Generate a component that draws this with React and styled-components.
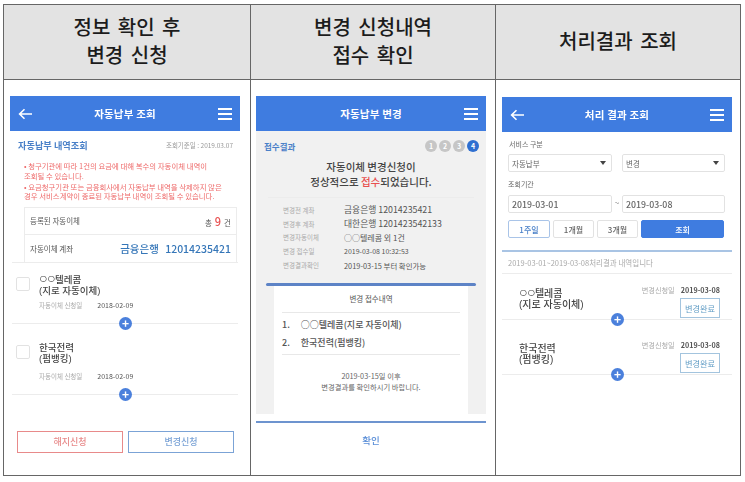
import React from "react";
import styled, { createGlobalStyle } from "styled-components";

const Global = createGlobalStyle`
  html, body { margin: 0; padding: 0; background: #fff; }
  body { font-family: "Noto Sans CJK KR", "Noto Sans", sans-serif; width: 745px; height: 482px; overflow: hidden; }
  * { box-sizing: border-box; }
`;

const Table = styled.div`
  margin: 4px 0 0 3px;
  width: 738px;
  height: 472px;
  border: 1.5px solid #666;
  display: grid;
  grid-template-columns: 246px 245px 1fr;
  grid-template-rows: 75px 1fr;
`;
const HeadCell = styled.div`
  background: #e3e3e3;
  border-bottom: 1.5px solid #666;
  border-left: ${(p) => (p.$first ? "none" : "1.5px solid #666")};
  display: flex;
  flex-direction: column;
  justify-content: center;
  align-items: center;
  padding-bottom: 3px;
  font-size: 20px;
  line-height: 28px;
  font-weight: 500;
  color: #1c1c1c;
  word-spacing: 3px;
`;
const Cell = styled.div`
  border-left: ${(p) => (p.$first ? "none" : "1.5px solid #666")};
  padding: ${(p) => p.$pad};
  display: flex;
  flex-direction: column;
  min-height: 0;
  overflow: hidden;
  filter: blur(0.5px);
`;
const AppBar = styled.div`
  flex: none;
  height: 35px;
  background: #3f7ce0;
  color: #fff;
  display: flex;
  align-items: center;
  justify-content: space-between;
  padding: 0 8px;
  font-size: 10.5px;
  font-weight: 700;
  letter-spacing: 0.2px;
  position: relative;
`;
const BarTitle = styled.span`
  position: absolute;
  left: 0;
  right: 0;
  text-align: center;
`;
const Spacer = styled.span`
  width: 14px;
`;
const Arrow = () => (
  <svg width="15" height="12" viewBox="0 0 15 12" fill="none" stroke="#fff" strokeWidth="1.6">
    <path d="M14 6H2M6.5 1.2 1.6 6l4.9 4.8" />
  </svg>
);
const Menu = () => (
  <svg width="14" height="12" viewBox="0 0 14 12" fill="#fff">
    <rect y="0" width="14" height="2" />
    <rect y="5" width="14" height="2" />
    <rect y="10" width="14" height="2" />
  </svg>
);
const Plus = styled.span`
  position: absolute;
  left: 50%;
  top: -6px;
  margin-left: -6px;
  width: 13px;
  height: 13px;
  border-radius: 50%;
  background: #4b80dc;
  color: #fff;
  font-size: 12px;
  line-height: 12px;
  font-weight: 700;
  text-align: center;
`;

/* column 1 */
const TitleRow = styled.div`
  display: flex;
  justify-content: space-between;
  align-items: center;
  padding: 7px 7px 0 8px;
  height: 21px;
`;
const SectionTitle = styled.span`
  font-size: ${(p) => p.$s || "8.5px"};
  font-weight: 700;
  color: #4a80c8;
`;
const SmallGray = styled.span`
  font-size: 6.5px;
  color: #9a9a9a;
`;
const Notes = styled.div`
  margin: 9px 0 0 14px;
  font-size: 7.4px;
  line-height: 9.5px;
  color: #ee6a6a;
`;
const Note = styled.div`
  margin-bottom: ${(p) => (p.$last ? "0" : "1.5px")};
  white-space: pre;
`;
const InfoBox = styled.div`
  margin: 6px 3px 0 14px;
  border: 1px solid #ececec;
  border-bottom: none;
`;
const InfoRow = styled.div`
  height: 27px;
  display: flex;
  align-items: center;
  justify-content: space-between;
  padding: 0 5px;
  font-size: 7.5px;
  color: #555;
  border-bottom: ${(p) => (p.$last ? "none" : "1px solid #ececec")};
`;
const Count = styled.span`
  font-size: 7.5px;
`;
const RedNum = styled.b`
  color: #e85050;
  font-size: 11px;
  font-weight: 500;
  margin: 0 3px;
`;
const BlueVal = styled.span`
  color: #3576b8;
  font-size: 10.5px;
  font-weight: 500;
  word-spacing: 4px;
`;
const Rule = styled.div`
  height: ${(p) => p.$h || "1px"};
  background: ${(p) => p.$c || "#ececec"};
  margin: ${(p) => p.$m || "0"};
  position: relative;
  flex: none;
`;
const Item = styled.div`
  display: flex;
  gap: 9px;
  padding: ${(p) => p.$top} 0 0 6px;
  height: ${(p) => p.$height};
`;
const Check = styled.span`
  width: 14px;
  height: 14px;
  border: 1px solid #e2e2e2;
  border-radius: 2px;
  flex: none;
`;
const Name = styled.div`
  font-family: "Liberation Sans", "Noto Sans CJK KR", sans-serif;
  font-size: 9.5px;
  line-height: 11px;
  margin-top: -3px;
  color: #444;
  font-weight: 500;
`;
const Rings = styled.span`
  font-size: 14px;
  line-height: 0;
  letter-spacing: -0.5px;
  font-weight: 400;
`;
const SubRow = styled.div`
  display: flex;
  gap: 15px;
  padding: 2px 0 0 29px;
  height: 25px;
  align-items: flex-start;
  font-size: 6.5px;
  line-height: 11px;
  color: #aaa;
`;
const DateText = styled.span`
  color: #555;
  font-size: 7px;
`;
const Buttons = styled.div`
  display: flex;
  gap: 5px;
  margin: 36px 0 0 7px;
`;
const OutlineBtn = styled.div`
  width: 106px;
  height: 22px;
  border: 1px solid ${(p) => p.$c};
  color: ${(p) => p.$c};
  display: flex;
  align-items: center;
  justify-content: center;
  font-size: 9px;
  font-weight: 500;
`;

/* column 2 */
const GrayPanel = styled.div`
  background: #f1f1f1;
  flex: none;
  height: 283px;
  display: flex;
  flex-direction: column;
  overflow: hidden;
`;
const StepRow = styled.div`
  display: flex;
  justify-content: space-between;
  align-items: center;
  padding: 8px 7px 0 8px;
  height: 22px;
`;
const Steps = styled.div`
  display: flex;
  gap: 2px;
`;
const Step = styled.span`
  width: 12px;
  height: 12px;
  border-radius: 50%;
  background: ${(p) => (p.$on ? "#2f6fd0" : "#c6c6c6")};
  color: #fff;
  font-size: 7px;
  line-height: 12px;
  text-align: center;
  font-weight: 700;
`;
const Result = styled.div`
  margin-top: 7px;
  text-align: center;
  font-size: 10.5px;
  line-height: 14.5px;
  font-weight: 500;
  color: #444;
`;
const RedInline = styled.span`
  color: #e85050;
`;
const Details = styled.div`
  padding: 5px 0 0 27px;
  display: flex;
  flex-direction: column;
`;
const DetailRow = styled.div`
  display: grid;
  grid-template-columns: 61px 1fr;
  align-items: center;
  height: 13.8px;
  font-size: 6.5px;
  color: #aaa;
`;
const DetailVal = styled.span`
  color: #555;
  font-size: ${(p) => p.$s || "7px"};
`;
const BlueTop = styled.div`
  flex: none;
  height: 3px;
  background: #5d83c6;
  margin: 11px 10px 0;
  border-radius: 2px;
`;
const Receipt = styled.div`
  flex: 1;
  background: #fff;
  margin: 0 18px;
  padding: 0 8px;
  display: flex;
  flex-direction: column;
`;
const ReceiptTitle = styled.div`
  height: 27px;
  display: flex;
  align-items: center;
  justify-content: center;
  font-size: 7.5px;
  color: #555;
  border-bottom: 1px solid #e8e8e8;
`;
const ReceiptList = styled.div`
  padding: 3px 0 2px;
  border-bottom: 1px solid #e8e8e8;
  font-size: 9px;
  color: #555;
`;
const ReceiptItem = styled.div`
  height: 18px;
  display: flex;
  gap: 11px;
  align-items: center;
  font-weight: 500;
`;
const ReceiptNote = styled.div`
  margin-top: 16px;
  text-align: center;
  font-size: 7.3px;
  line-height: 11.5px;
  color: #666;
`;
const Confirm = styled.div`
  text-align: center;
  margin-top: 10px;
  font-size: 9.5px;
  font-weight: 500;
  color: #5b8fd8;
`;

/* column 3 */
const FieldLabel = styled.div`
  font-size: 7px;
  line-height: 10px;
  color: #666;
  margin: ${(p) => p.$m};
`;
const Controls = styled.div`
  display: grid;
  grid-template-columns: 104px 103px;
  column-gap: 10px;
  margin: ${(p) => p.$m || "0"} 0 0 6px;
  position: relative;
`;
const Field = styled.div`
  height: 18px;
  border: 1.5px solid #e2e2e2;
  border-radius: 2px;
  display: flex;
  align-items: center;
  justify-content: space-between;
  padding: 0 3px;
  font-size: ${(p) => p.$s || "7.5px"};
  font-weight: ${(p) => p.$w || 400};
  color: #666;
`;
const Caret = styled.span`
  width: 0;
  height: 0;
  border-left: 3px solid transparent;
  border-right: 3px solid transparent;
  border-top: 4px solid #444;
  margin-right: 2px;
`;
const Tilde = styled.span`
  position: absolute;
  left: 105px;
  width: 8px;
  top: 2px;
  text-align: center;
  font-size: 8px;
  color: #888;
`;
const Periods = styled.div`
  display: grid;
  grid-template-columns: 42px 41px 41px 83px;
  column-gap: 3px;
  margin: 7px 0 0 6px;
`;
const Period = styled.div`
  height: 18px;
  border-radius: 2px;
  border: 1.5px solid ${(p) => (p.$fill ? "#3f7ce0" : p.$on ? "#a9c4e8" : "#e2e2e2")};
  background: ${(p) => (p.$fill ? "#3f7ce0" : "#fff")};
  color: ${(p) => (p.$fill ? "#fff" : p.$on ? "#4a80c8" : "#666")};
  display: flex;
  align-items: center;
  justify-content: center;
  font-size: 8px;
  font-weight: 500;
`;
const RangeText = styled.div`
  height: 21px;
  padding: 0 6px;
  display: flex;
  align-items: center;
  font-size: 7.5px;
  color: #aaa;
`;
const ResultItem = styled.div`
  height: ${(p) => p.$height};
  display: flex;
  justify-content: space-between;
  padding: ${(p) => p.$top} 12px 0 17px;
`;
const ResultName = styled(Name)`
  margin-top: 3px;
  font-size: 10px;
  line-height: 11px;
`;
const RightCol = styled.div`
  display: flex;
  flex-direction: column;
  align-items: flex-end;
  gap: 3px;
`;
const RightTop = styled.div`
  display: flex;
  gap: 6px;
  align-items: center;
  font-size: 7.2px;
  line-height: 10px;
  color: #aaa;
`;
const DateBold = styled.span`
  color: #555;
  font-size: 7.2px;
  font-weight: 700;
`;
const Badge = styled.div`
  width: 40px;
  height: 20px;
  border: 1.5px solid #a3c4de;
  color: #5e9bc4;
  font-size: 8.2px;
  display: flex;
  align-items: center;
  justify-content: center;
`;

const Telecom = () => (
  <>
    <Rings>○○</Rings>텔레콤
  </>
);

const ListItem = ({ a, b, top, height }) => (
  <>
    <Item $top={top} $height={height}>
      <Check />
      <Name>{a}<br />{b}</Name>
    </Item>
    <SubRow>
      <span>자동이체 신청일</span>
      <DateText>2018-02-09</DateText>
    </SubRow>
    <Rule $m="0 2px 0 2px"><Plus>+</Plus></Rule>
  </>
);

const ResultRow = ({ a, b, top, height }) => (
  <>
    <ResultItem $top={top} $height={height}>
      <ResultName>{a}<br />{b}</ResultName>
      <RightCol>
        <RightTop><span>변경신청일</span><DateBold>2019-03-08</DateBold></RightTop>
        <Badge>변경완료</Badge>
      </RightCol>
    </ResultItem>
    <Rule><Plus>+</Plus></Rule>
  </>
);

export default function App() {
  return (
    <>
      <Global />
      <Table>
        <HeadCell $first><span>정보 확인 후</span><span>변경 신청</span></HeadCell>
        <HeadCell><span>변경 신청내역</span><span>접수 확인</span></HeadCell>
        <HeadCell><span>처리결과 조회</span></HeadCell>

        <Cell $first $pad="16px 10px 0 6px">
          <AppBar><Arrow /><BarTitle>자동납부 조회</BarTitle><Menu /></AppBar>
          <TitleRow>
            <SectionTitle $s="9.2px">자동납부 내역조회</SectionTitle>
            <SmallGray>조회기준일 : 2019.03.07</SmallGray>
          </TitleRow>
          <Notes>
            <Note>{"• 청구기관에 따라 1건의 요금에 대해 복수의 자동이체 내역이\n조회될 수 있습니다."}</Note>
            <Note $last>{"• 요금청구기관 또는 금융회사에서 자동납부 내역을 삭제하지 않은\n경우 서비스계약이 종료된 자동납부 내역이 조회될 수 있습니다."}</Note>
          </Notes>
          <InfoBox>
            <InfoRow>
              <span>등록된 자동이체</span>
              <Count>총<RedNum>9</RedNum>건</Count>
            </InfoRow>
            <InfoRow $last>
              <span>자동이체 계좌</span>
              <BlueVal>금융은행 12014235421</BlueVal>
            </InfoRow>
          </InfoBox>
          <Rule $m="0 2px" />
          <ListItem a={<Telecom />} b="(지로 자동이체)" top="14px" height="35px" />
          <ListItem a="한국전력" b="(펌뱅킹)" top="21px" height="45px" />
          <Buttons>
            <OutlineBtn $c="#e88a8a">해지신청</OutlineBtn>
            <OutlineBtn $c="#7ba3d6">변경신청</OutlineBtn>
          </Buttons>
        </Cell>

        <Cell $pad="16px 9px 0 5px">
          <AppBar><Spacer /><BarTitle>자동납부 변경</BarTitle><Menu /></AppBar>
          <GrayPanel>
            <StepRow>
              <SectionTitle>접수결과</SectionTitle>
              <Steps>
                <Step>1</Step><Step>2</Step><Step>3</Step><Step $on>4</Step>
              </Steps>
            </StepRow>
            <Result>
              자동이체 변경신청이<br />
              정상적으로 <RedInline>접수</RedInline>되었습니다.
            </Result>
            <Rule $m="8px 12px 0" />
            <Details>
              <DetailRow><span>변경전 계좌</span><DetailVal $s="8.8px">금융은행 12014235421</DetailVal></DetailRow>
              <DetailRow><span>변경후 계좌</span><DetailVal $s="8.8px">대한은행 1201423542133</DetailVal></DetailRow>
              <DetailRow><span>변경자동이체</span><DetailVal $s="8px">○○텔레콤 외 1건</DetailVal></DetailRow>
              <DetailRow><span>변경 접수일</span><DetailVal>2019-03-08 10:32:53</DetailVal></DetailRow>
              <DetailRow><span>변경결과확인</span><DetailVal $s="7.4px">2019-03-15 부터 확인가능</DetailVal></DetailRow>
            </Details>
            <BlueTop />
            <Receipt>
              <ReceiptTitle>변경 접수내역</ReceiptTitle>
              <ReceiptList>
                <ReceiptItem><span>1.</span><span>○○텔레콤(지로 자동이체)</span></ReceiptItem>
                <ReceiptItem><span>2.</span><span>한국전력(펌뱅킹)</span></ReceiptItem>
              </ReceiptList>
              <ReceiptNote>
                2019-03-15일 이후<br />
                변경결과를 확인하시기 바랍니다.
              </ReceiptNote>
            </Receipt>
          </GrayPanel>
          <Rule $c="#6d94cf" $h="2px" $m="7px 0 0" />
          <Confirm>확인</Confirm>
        </Cell>

        <Cell $pad="17px 8px 0 6px">
          <AppBar><Arrow /><BarTitle>처리 결과 조회</BarTitle><Menu /></AppBar>
          <FieldLabel $m="7px 0 0 7px">서비스 구분</FieldLabel>
          <Controls $m="5px">
            <Field>자동납부<Caret /></Field>
            <Field>변경<Caret /></Field>
          </Controls>
          <FieldLabel $m="7px 0 0 6px">조회기간</FieldLabel>
          <Controls $m="6px">
            <Field $s="8.8px" $w={500}>2019-03-01</Field>
            <Tilde>~</Tilde>
            <Field $s="8.8px" $w={500}>2019-03-08</Field>
          </Controls>
          <Periods>
            <Period $on>1주일</Period>
            <Period>1개월</Period>
            <Period>3개월</Period>
            <Period $fill>조회</Period>
          </Periods>
          <Rule $c="#a9c4e4" $h="2px" $m="12px 0 0" />
          <RangeText>2019-03-01~2019-03-08처리결과 내역입니다</RangeText>
          <Rule />
          <ResultRow a={<Telecom />} b="(지로 자동이체)" top="11px" height="45px" />
          <ResultRow a="한국전력" b="(펌뱅킹)" top="20px" height="54px" />
        </Cell>
      </Table>
    </>
  );
}
